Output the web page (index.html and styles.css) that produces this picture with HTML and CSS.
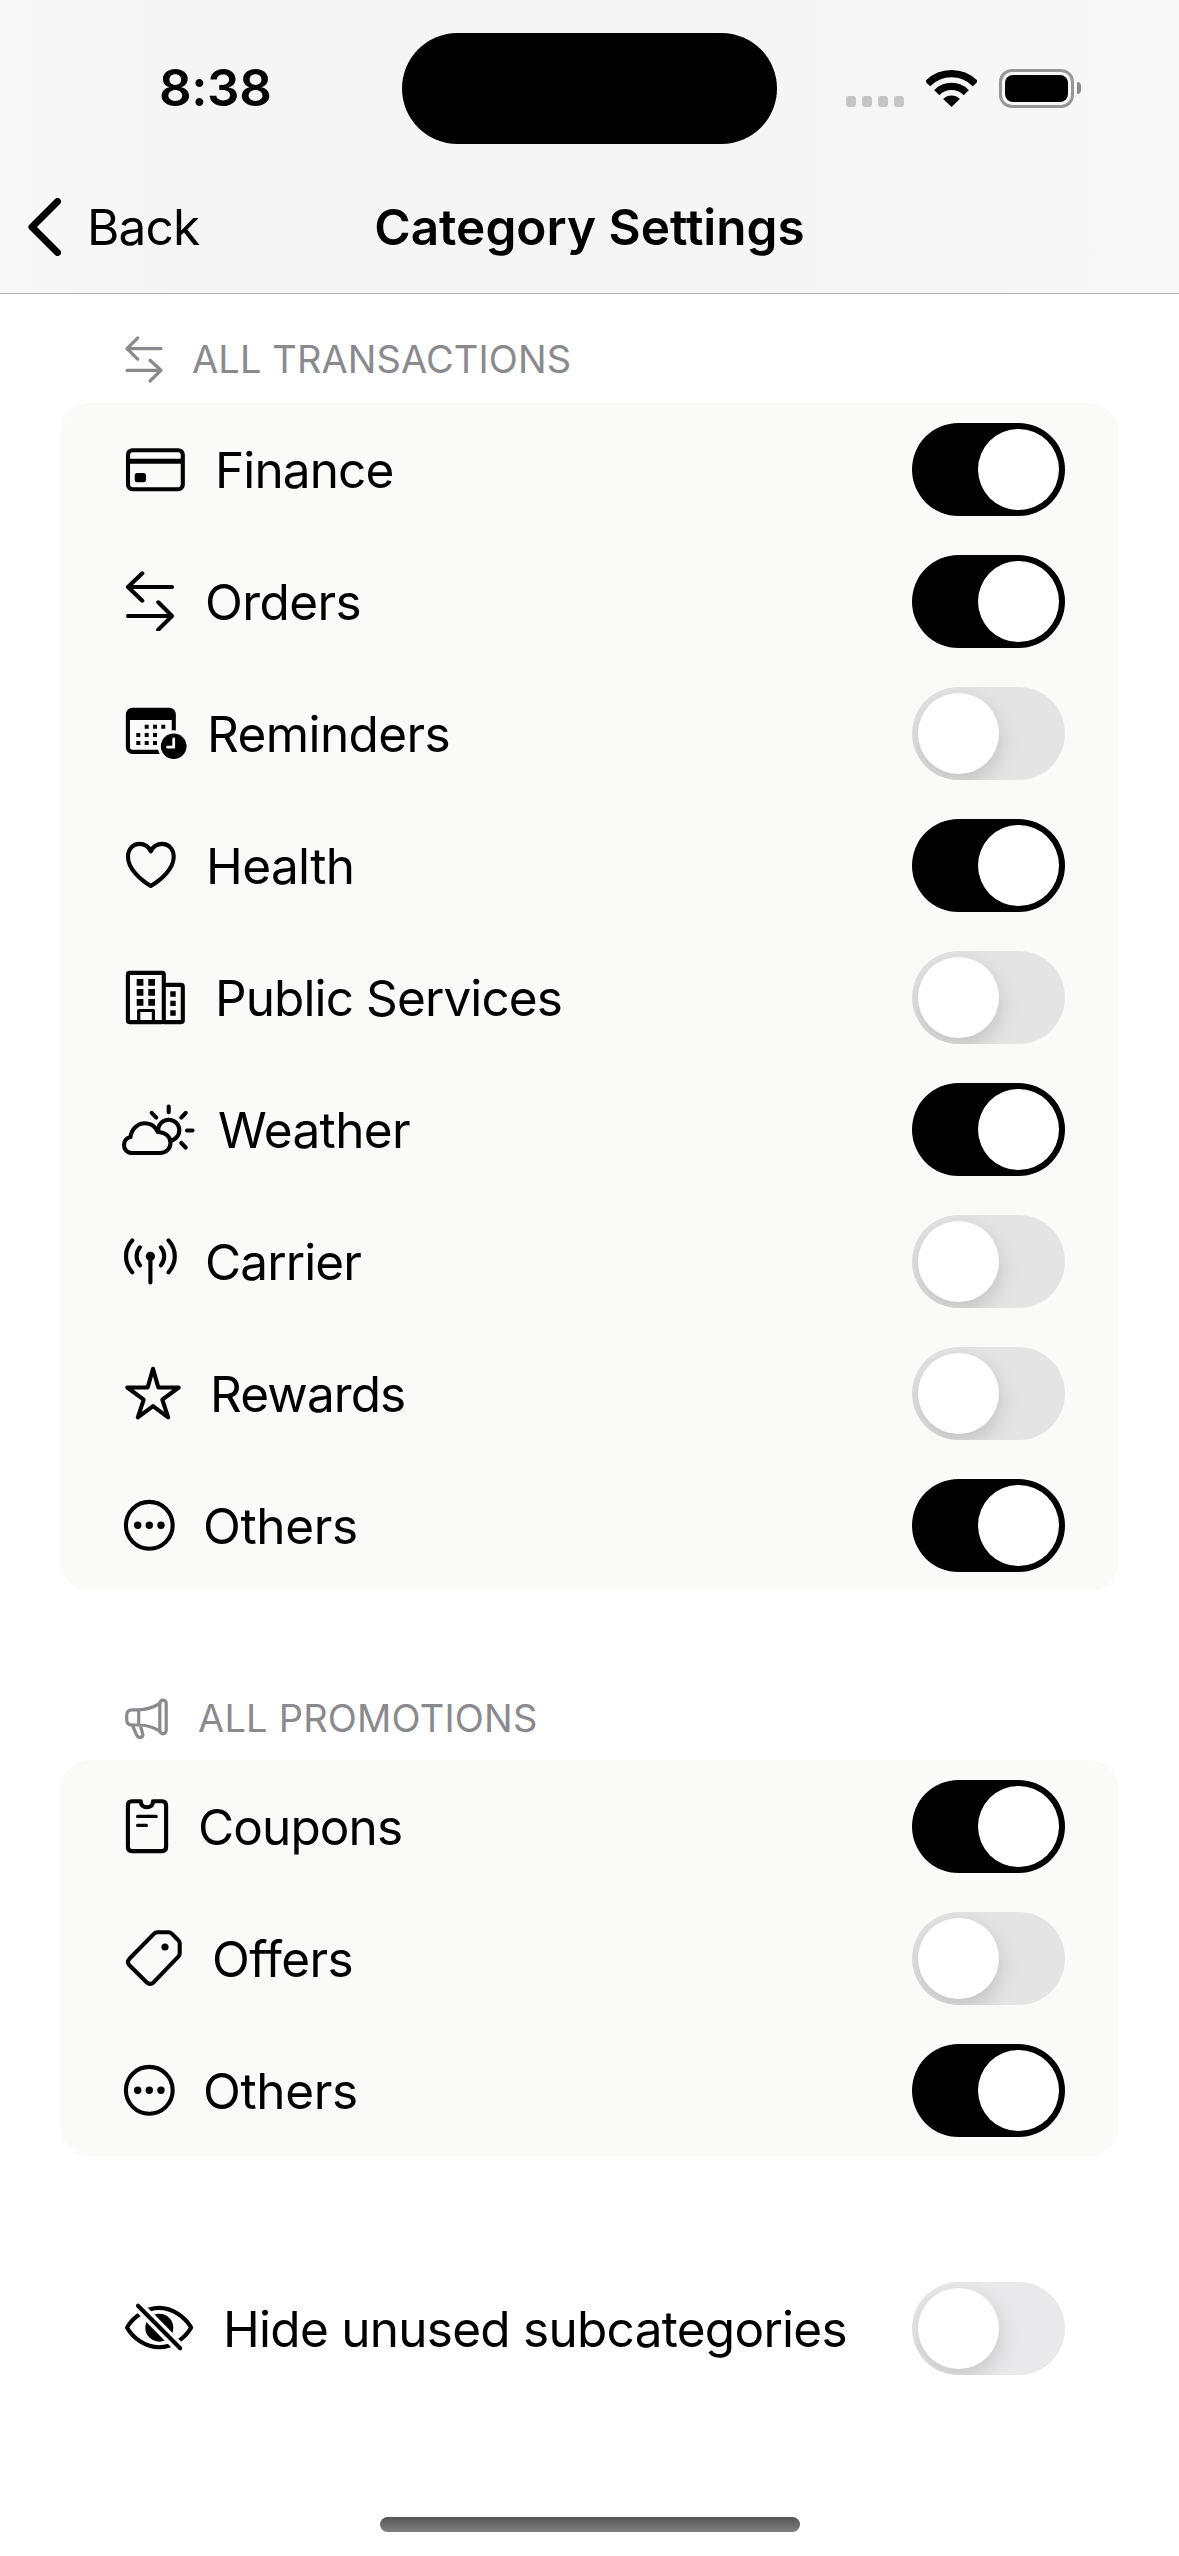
FILE: index.html
```html
<!DOCTYPE html>
<html lang="en">
<head>
<meta charset="utf-8">
<title>Category Settings</title>
<link rel="stylesheet" href="styles.css">
</head>
<body>
<svg class="sprite" aria-hidden="true">
  <symbol id="swap" viewBox="0 0 60 60"><path d="M52 16H8M22.3 2.3L8 16l14.3 13.7M8 45h44M38.3 31.3L52 45 38.3 58.7"/></symbol>
  <symbol id="more" viewBox="0 0 60 60"><circle cx="29.3" cy="30.3" r="23.4"/><g class="solid"><circle cx="17.7" cy="30.3" r="3.7"/><circle cx="29.3" cy="30.3" r="3.7"/><circle cx="41" cy="30.3" r="3.7"/></g></symbol>
</svg>

<header class="top">
  <div class="status">
    <time class="clock">8:38</time>
    <div class="island"></div>
    <div class="indicators">
      <div class="dots"><i></i><i></i><i></i><i></i></div>
      <svg class="wifi" width="51" height="37" viewBox="0 0 51 37">
        <clipPath id="fan"><path d="M25.5 37L-12.5 0h76z"/></clipPath>
        <g clip-path="url(#fan)" fill="none" stroke="#000" stroke-width="7.2"><circle cx="25.5" cy="37" r="33.3"/><circle cx="25.5" cy="37" r="20.6"/><circle cx="25.5" cy="37" r="11.5" fill="#000" stroke="none"/></g>
      </svg>
      <div class="battery"><div class="shell"><div class="charge"></div></div><div class="tip"></div></div>
    </div>
  </div>
  <nav class="nav">
    <a class="back"><svg width="33" height="58" viewBox="0 0 33 58"><path d="M29.5 3.500L4 29l25.500 25.500" fill="none" stroke="#000" stroke-width="7" stroke-linecap="round" stroke-linejoin="round"/></svg><span>Back</span></a>
    <h1>Category Settings</h1>
  </nav>
</header>

<main>
  <h2 class="heading"><svg class="icon w72" viewBox="0 0 72 60"><path d="M41 18.700H7M17.700 8L7 18.700l10.700 10.500M7 40.300h34M30 30.300l11 10L30 51"/></svg><span>ALL TRANSACTIONS</span></h2>
  <section class="card">
    <div class="row"><svg class="icon w95" viewBox="0 0 95 60"><rect x="8" y="11.200" width="54.800" height="39" rx="4.500"/><g class="solid"><path d="M7 19.700h57v5H7z"/><rect x="14.700" y="34" width="11.300" height="9.300" rx="2.500"/></g></svg><span class="label tight">Finance</span><span class="switch on"></span></div>
    <div class="row"><svg class="icon w85" viewBox="0 0 85 60"><use href="#swap" width="60" height="60"/></svg><span class="label">Orders</span><span class="switch on"></span></div>
    <div class="row"><svg class="icon w87" viewBox="0 0 87 60"><rect x="7.900" y="6.900" width="45.900" height="42" rx="4.500"/><path class="solid" d="M7 10q0-4 4-4h40q4 0 4 4v7H7z"/><path class="solid" d="M24.700 21.700h4v4h-4zM33 21.700h4v4h-4zM41.300 21.700h4v4h-4zM16.300 30h4v4h-4zM24.700 30h4v4h-4zM33 30h4v4h-4zM16.300 38h4v4h-4zM24.700 38h4v4h-4zM33 38h4v4h-4z"/><circle class="paper" cx="53.700" cy="43.300" r="16"/><circle class="solid" cx="53.700" cy="43.300" r="12.800"/><path class="hands" d="M53.700 36v8.200h-6.200"/></svg><span class="label">Reminders</span><span class="switch"></span></div>
    <div class="row"><svg class="icon w86" viewBox="0 0 86 60"><path d="M30.800 51C20 44.500 8 33.500 8 22 8 14 13 8.900 19.500 8.900c5 0 8.900 2.400 11.300 7.400 2.400-5 6.300-7.400 11.300-7.400C48.600 8.900 53.700 14 53.700 22c0 11.500-12 22.500-22.900 29z"/></svg><span class="label">Health</span><span class="switch on"></span></div>
    <div class="row"><svg class="icon w95" viewBox="0 0 95 60"><rect x="7.900" y="5.900" width="35.900" height="49.200" rx="1.500"/><path d="M44 17.900h17q1.800 0 1.800 1.800v33.600q0 1.800-1.800 1.800H44"/><path class="thin" d="M18.700 54V43.500h14.700V54"/><path class="solid" d="M16.700 12h6.700v6.700h-6.700zM28.300 12H35v6.700h-6.700zM16.700 22h6.700v6.700h-6.700zM28.300 22H35v6.700h-6.700zM16.700 32h6.700v6.700h-6.700zM28.300 32H35v6.700h-6.700zM50.300 24.300h5.400v5.400h-5.400zM50.300 33.700h5.400v5.400h-5.400zM50.300 43.300h5.400v5.400h-5.400z"/></svg><span class="label tight">Public Services</span><span class="switch"></span></div>
    <div class="row"><svg class="icon w98" viewBox="0 0 98 60"><circle cx="48.700" cy="31.300" r="10.600"/><path d="M48.700 7.500v5.800M31.700 13.800l4.600 4.800M65.700 13.800l-4.400 4.800M67 31.500h5.500M61.300 44l4.400 4.500"/><path class="cloud" d="M12 54C7 54 4 50.200 4 46c0-4.300 2.800-7.300 6.500-8C11.500 29.500 18 24.200 25 24.200c6 0 10.500 3.300 12.800 8.800C45 33 50.500 37.500 50.500 43.700 50.500 49.700 46 54 40 54z"/></svg><span class="label">Weather</span><span class="switch on"></span></div>
    <div class="row"><svg class="icon w85" viewBox="0 0 85 60"><path d="M30.400 26v25.400M12.300 9.300C3.900 18.500 3.900 32 12.300 41.300M19.900 16.300C15.500 21.500 15.500 29 19.900 34.300M48.500 9.300C56.900 18.500 56.900 32 48.500 41.300M40.900 16.300C45.300 21.500 45.300 29 40.900 34.300"/><circle class="solid" cx="30.400" cy="25.300" r="4.600"/></svg><span class="label tight">Carrier</span><span class="switch"></span></div>
    <div class="row"><svg class="icon w90" viewBox="0 0 90 60"><path d="M33 5.800l5.300 18.600 20.400.1-16.400 12.100 5.900 17.800L33 43.200 17.800 54.400l5.900-17.800L7.300 24.500l20.400-.1z"/></svg><span class="label tight">Rewards</span><span class="switch"></span></div>
    <div class="row"><svg class="icon w83" viewBox="0 0 83 60"><use href="#more" width="60" height="60"/></svg><span class="label loose">Others</span><span class="switch on"></span></div>
  </section>

  <h2 class="heading second"><svg class="icon w78" viewBox="0 0 78 60"><path d="M39.800 15.500C33 19.500 26 21.800 18.700 21.800h-6.500q-5.500 0-5.500 5.500v4.200q0 5.500 5.500 5.500h6.500c7.300 0 14.300 2 21.100 6M18.700 21.800V37M12.500 37.500l4.300 9.800q1.500 3 4.300 1.900 2.500-1.200 1.500-4L20.300 37.500"/><rect x="39.800" y="12.100" width="6.400" height="33.700" rx="3.200"/></svg><span>ALL PROMOTIONS</span></h2>
  <section class="card">
    <div class="row"><svg class="icon w78" viewBox="0 0 78 60"><path d="M20.800 5.300H12q-4.100 0-4.100 4.100V51q0 4.100 4.100 4.100h30q4.100 0 4.100-4.100V9.400q0-4.100-4.100-4.100h-9c0 4-2.500 6-6.100 6s-6.100-2-6.100-6z" stroke="none"/><path d="M20.800 5.300H12q-4.100 0-4.100 4.100V51q0 4.100 4.100 4.100h30q4.100 0 4.100-4.100V9.400q0-4.100-4.100-4.100h-9c0 4-2.500 6-6.100 6s-6.100-2-6.100-6"/><path class="thin" d="M17.600 20.400h18.600M17.600 29.400h8.800"/></svg><span class="label tight">Coupons</span><span class="switch on"></span></div>
    <div class="row"><svg class="icon w92" viewBox="0 0 92 60"><path d="M37.500 4.200h10.800q2 0 3.400 1.400l6.600 6.600q1.400 1.400 1.400 3.400v9.600q0 2-1.400 3.400L33.800 54.200q-3.600 3.400-7.200 0L9.400 37.300q-3-3.300 0-6.500L34.100 5.600q1.400-1.400 3.400-1.400z"/><circle class="solid" cx="45" cy="19" r="3.600"/></svg><span class="label">Offers</span><span class="switch"></span></div>
    <div class="row"><svg class="icon w83" viewBox="0 0 83 60"><use href="#more" width="60" height="60"/></svg><span class="label loose">Others</span><span class="switch on"></span></div>
  </section>

  <section class="card plain">
    <div class="row"><svg class="icon w103" viewBox="0 0 103 60"><path d="M7 29.600C13 19 26 9.900 39.200 9.900S65 19 71.200 29.600C65 40.500 52.500 49.200 39.200 49.200S13 40.500 7 29.600z"/><circle class="solid" cx="39.300" cy="29.700" r="14"/><path class="gap" d="M16 5.700l46 46.700"/><path d="M18 7.700l42.200 42.600"/></svg><span class="label long">Hide unused subcategories</span><span class="switch"></span></div>
  </section>
</main>
<footer class="home"><div class="bar"></div></footer>
</body>
</html>
```
FILE: styles.css
```css
* { box-sizing: border-box; }

body {
  margin: 0;
  width: 1179px;
  height: 2556px;
  display: flex;
  flex-direction: column;
  background: #fff;
  color: #000;
  font-family: Inter, "Liberation Sans", sans-serif;
  font-size: 49.5px;
  overflow: hidden;
}

.sprite { display: none; }

/* Status bar and navigation */
.top {
  height: 294px;
  border-bottom: 1px solid #b3b3b3;
  background: linear-gradient(90deg, #f7f8f7 0, #f5f5f5 16%, #f5f5f5 60%, #f8f8f8 100%);
}

.status {
  height: 161px;
  padding-top: 16px;
  display: grid;
  grid-template-columns: 402px 375px 1fr;
  align-items: center;
}

.clock {
  padding: 0 0 2px 159px;
  font-size: 51px;
  font-weight: 600;
  letter-spacing: -0.4px;
}

.island { height: 111px; border-radius: 56px; background: #000; }

.indicators { display: flex; align-items: center; padding: 0 0 1px 69px; }
.dots { display: flex; gap: 6px; padding-top: 26px; }
.dots i { width: 10px; height: 11px; border-radius: 3px; background: #c5c5c5; }
.wifi { margin-left: 22px; }
.battery { display: flex; align-items: center; gap: 3px; margin-left: 22px; }
.shell { width: 75px; height: 39px; padding: 3px; border: 3px solid #979797; border-radius: 13px; }
.charge { height: 27px; border-radius: 8px; background: #000; }
.tip { width: 4px; height: 12px; border-radius: 0 4px 4px 0; background: #8c8c8c; }

.nav {
  height: 132px;
  display: grid;
  grid-template-columns: 1fr auto 1fr;
  align-items: center;
}

.back { display: flex; align-items: center; gap: 26px; padding-left: 28px; letter-spacing: -0.8px; }
h1 { margin: 0; font-size: 49.5px; font-weight: 600; letter-spacing: 0; }

/* Grouped lists */
main { flex: 1; padding: 0 60px; }

.heading {
  height: 109px;
  margin: 0;
  padding: 23px 0 0 60px;
  display: flex;
  align-items: flex-start;
  color: #8a8a8e;
  font-size: 38px;
  font-weight: 400;
  line-height: 60px;
  letter-spacing: 0.1px;
}
.heading.second { margin-top: 60px; padding-top: 24px; letter-spacing: 0.2px; }
.heading .icon { margin-top: 13px; stroke: #8a8a8e; stroke-width: 3.2; }
.heading span { margin-top: 12px; }
.heading.second span { margin-top: 13px; }

.card { border-radius: 30px; background: #fafaf9; }

.row {
  height: 132px;
  padding: 0 54px 0 60px;
  display: flex;
  align-items: center;
}

.label { flex: 1; padding-top: 1px; white-space: nowrap; letter-spacing: -0.6px; }
.tight { letter-spacing: -0.9px; }
.loose { letter-spacing: -0.35px; }
.long { letter-spacing: -0.73px; }

.icon {
  flex: none;
  height: 60px;
  fill: none;
  stroke: #000;
  stroke-width: 4.1;
  stroke-linecap: round;
  stroke-linejoin: round;
}
.w72 { width: 72px; }
.w78 { width: 78px; }
.w83 { width: 83px; }
.w85 { width: 85px; }
.w86 { width: 86px; }
.w87 { width: 87px; }
.w90 { width: 90px; }
.w92 { width: 92px; }
.w95 { width: 95px; }
.w98 { width: 98px; }
.w103 { width: 103px; }

.solid { fill: #000; stroke: none; }
.paper { fill: #fafaf9; stroke: none; }
.cloud { fill: #fafaf9; }
.hands { stroke: #fafaf9; stroke-width: 2.8; }
.thin { stroke-width: 3.2; }
.gap { stroke: #fff; stroke-width: 11; stroke-linecap: butt; }

.switch {
  flex: none;
  width: 153px;
  height: 93px;
  padding: 6px;
  display: flex;
  border-radius: 47px;
  background: #e4e4e4;
  overflow: hidden;
}
.switch::before {
  content: "";
  width: 81px;
  height: 81px;
  border-radius: 50%;
  background: #fff;
  box-shadow: 0 8px 22px rgba(0, 0, 0, 0.16);
}
.switch.on { justify-content: flex-end; background: #000; }

.plain { margin-top: 106px; background: none; }
.plain .switch { background: #e9e9eb; }

/* Home indicator */
.home { height: 39px; display: flex; justify-content: center; }
.bar { width: 420px; height: 15px; border-radius: 8px; background: linear-gradient(#555, #808080); }
```
